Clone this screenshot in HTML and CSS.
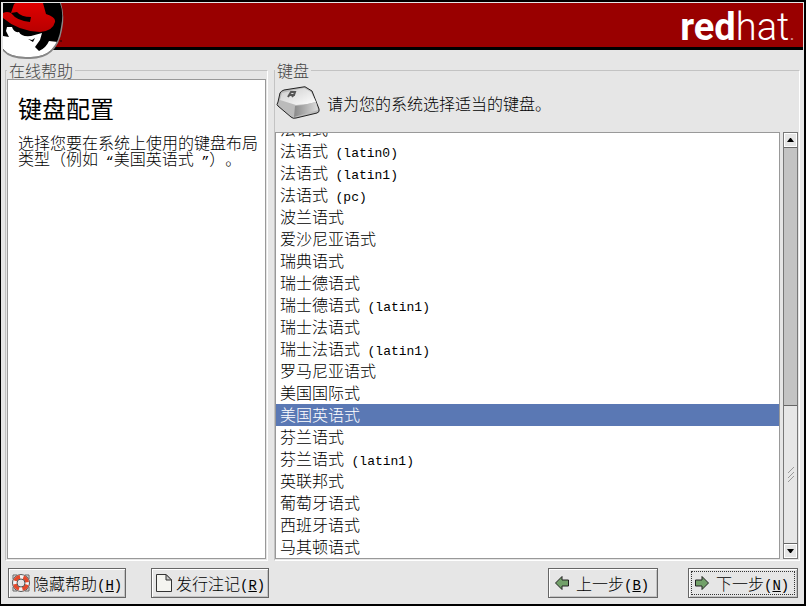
FILE: index.html
```
<!DOCTYPE html>
<html lang="zh-CN">
<head>
<meta charset="utf-8">
<title>键盘配置</title>
<link rel="stylesheet" href="styles.css">
</head>
<body>
<div class="window">
<header class="banner">
  <svg class="shadowman" width="66" height="62" viewBox="0 0 66 62" aria-hidden="true">
    <defs>
      <clipPath id="disc"><path d="M0 0H57Q61 10 58 24Q54 55 26 54Q8 55 0 46Z"/></clipPath>
      <linearGradient id="felt" x2="0" y2="1"><stop stop-color="#e00000"/><stop offset="1" stop-color="#b80000"/></linearGradient>
    </defs>
    <path d="M0 0H58Q62 14 59 27Q54 56 27 56Q8 57 0 48Z" fill="#888"/>
    <g clip-path="url(#disc)">
      <path d="M0 0H66V60H0Z" fill="#000"/>
      <path d="M0 33L6 34L3 28L4 24L9 24Q11 30 16 29Q18 34 28 33L39 30L37 37L32 44L36 48Q43 45 46 38L55 39Q47 57 25 57Q7 56 0 46Z" fill="#fff"/>
      <path d="M0 10Q4 8 8 10L11 1Q13 -1 19 0H40L43 11Q53 14 52 19Q50 28 37 29Q15 28 0 15Z" fill="url(#felt)"/>
      <path d="M8 10L14 9Q18 14 28 14L27 19Q14 18 8 10Z" fill="#000"/>
      <path d="M25 36L29 37L32 35L30 39Z" fill="#000"/>
    </g>
    <circle cx="58" cy="38" r="1" fill="#400"/>
  </svg>
  <div class="brand"><b>red</b>hat<small>.</small></div>
</header>
<main class="content">
  <fieldset class="frame help">
    <legend>在线帮助</legend>
    <div class="help-text">
      <h1>键盘配置</h1>
      <p>选择您要在系统上使用的键盘布局类型（例如<span class="latin"> “</span>美国英语式<span class="latin"> ”</span>）。</p>
    </div>
  </fieldset>
  <fieldset class="frame keyboard">
    <legend>键盘</legend>
    <div class="prompt">
      <svg width="46" height="36" viewBox="0 0 46 36" aria-hidden="true">
        <defs>
          <linearGradient id="top" x2="1" y2="1"><stop stop-color="#ccc"/><stop offset="1" stop-color="#fff"/></linearGradient>
          <linearGradient id="front" x2="1"><stop stop-color="#888"/><stop offset="1" stop-color="#ddd"/></linearGradient>
        </defs>
        <path d="M4 8Q5 6 8 5L27 2Q29 1 31 3L36 6L43 24Q44 27 41 28L20 33Q17 34 15 32L2 21Q0 20 2 17Z" fill="#bbb" stroke="#222"/>
        <path d="M6 8L28 3L35 7L40 17Q30 20 20 20L4 15Z" fill="url(#top)"/>
        <path d="M19 21Q30 20 40 17L42 25L18 32Z" fill="url(#front)"/>
        <path d="M12 12L15 7L19 7L18 10L14 10M16 10L17 12" fill="none" stroke="#555" stroke-width="2"/>
      </svg>
      <label id="prompt">请为您的系统选择适当的键盘。</label>
    </div>
    <div class="list-row">
      <ul class="list" role="listbox" aria-labelledby="prompt">
        <li>法语式</li>
        <li>法语式 <span class="latin">(latin0)</span></li>
        <li>法语式 <span class="latin">(latin1)</span></li>
        <li>法语式 <span class="latin">(pc)</span></li>
        <li>波兰语式</li>
        <li>爱沙尼亚语式</li>
        <li>瑞典语式</li>
        <li>瑞士德语式</li>
        <li>瑞士德语式 <span class="latin">(latin1)</span></li>
        <li>瑞士法语式</li>
        <li>瑞士法语式 <span class="latin">(latin1)</span></li>
        <li>罗马尼亚语式</li>
        <li>美国国际式</li>
        <li class="selected">美国英语式</li>
        <li>芬兰语式</li>
        <li>芬兰语式 <span class="latin">(latin1)</span></li>
        <li>英联邦式</li>
        <li>葡萄牙语式</li>
        <li>西班牙语式</li>
        <li>马其顿语式</li>
      </ul>
      <div class="scrollbar">
        <button class="step" aria-label="向上"><svg width="7" height="4" viewBox="0 0 7 4"><path d="M0 4L3 0H4L7 4Z"/></svg></button>
        <div class="track"></div>
        <div class="thumb"><svg width="8" height="17" viewBox="0 0 8 17"><path d="M1 7L7 1M1 12L7 6M1 16L7 10" stroke="#999"/></svg></div>
        <button class="step" aria-label="向下"><svg width="7" height="4" viewBox="0 0 7 4"><path d="M0 0L3 4H4L7 0Z"/></svg></button>
      </div>
    </div>
  </fieldset>
</main>
<footer class="actions">
  <button class="btn hide"><svg width="20" height="20" viewBox="0 0 20 20" aria-hidden="true"><path d="M2 6V2H6M14 2H18V6M18 14V18H14M6 18H2V14" fill="none" stroke="#666"/><circle cx="10" cy="10" r="9" fill="#555"/><circle cx="10" cy="10" r="6" fill="none" stroke="#f4f4f4" stroke-width="4"/><circle cx="10" cy="10" r="6" fill="none" stroke="#e5482a" stroke-width="4" stroke-dasharray="6 3.42" stroke-dashoffset="-1.7"/><circle cx="10" cy="10" r="4" fill="#e6e6e6" stroke="#555"/></svg><span>隐藏帮助<span class="latin">(<u>H</u>)</span></span></button>
  <button class="btn notes"><svg width="20" height="20" viewBox="0 0 20 20" aria-hidden="true"><path d="M2.5 1.5H12L17.5 7V18.5H2.5Z" fill="#f4f4f0" stroke="#333"/><path d="M12 1.5V7H17.5Z" fill="#ccc" stroke="#333"/></svg><span>发行注记<span class="latin">(<u>R</u>)</span></span></button>
  <span class="spacer"></span>
  <button class="btn nav back"><svg width="16" height="16" viewBox="0 0 16 16" aria-hidden="true"><path d="M1.5 8L8 1.5V5H14.5V11H8V14.5Z" fill="#72a069" stroke="#222"/></svg><span>上一步<span class="latin">(<u>B</u>)</span></span></button>
  <button class="btn nav next"><svg width="16" height="16" viewBox="0 0 16 16" aria-hidden="true"><path d="M14.5 8L8 1.5V5H1.5V11H8V14.5Z" fill="#72a069" stroke="#222"/></svg><span>下一步<span class="latin">(<u>N</u>)</span></span></button>
</footer>
</div>
</body>
</html>
```
FILE: styles.css
```
* { box-sizing: border-box; }
body {
  margin: 0;
  background: #000;
  color: #000;
  font: 300 16px/22px "Noto Sans CJK SC", sans-serif;
  text-spacing-trim: space-all;
}
.window {
  display: flex;
  flex-direction: column;
  height: 100vh;
  border: 2px solid #000;
  border-left-width: 1px;
  background: #e6e6e6;
  overflow: hidden;
}
.banner {
  flex: none;
  display: flex;
  justify-content: space-between;
  height: 48px;
  margin: 0 1px 0 2px;
  border-top: 1px solid #e6e6e6;
  border-bottom: 3px solid #000;
  background: #990000;
}
.shadowman { flex: none; position: relative; }
.brand {
  padding-right: 8px;
  color: #fff;
  font: 300 38px/48px Roboto, sans-serif;
}
.brand b { font-weight: 700; }
.brand small { font-size: 24px; opacity: .6; }
.content {
  flex: 1;
  min-height: 0;
  display: flex;
  gap: 6px;
  padding: 11px 4px 0;
}
.frame {
  display: flex;
  flex-direction: column;
  min-width: 0;
  min-height: 0;
  margin: 0;
  padding: 0 1px 1px 0;
  border: 1px solid #c3c3c3;
  border-right-color: #fff;
  border-bottom-color: #fff;
}
.frame legend { height: 18px; padding: 0 2px; color: #444; line-height: 18px; }
.help { flex: 0 0 263px; padding-left: 1px; }
.keyboard { flex: 1; }
.help-text { flex: 1; padding: 16px 6px 0 10px; border: 1px solid #999; background: #fff; }
h1 { margin: 0 0 14px; font-size: 24px; line-height: 24px; font-weight: 400; }
p { margin: 0; line-height: 16px; }
.prompt { flex: none; display: flex; align-items: center; gap: 5px; height: 53px; padding: 0 0 6px 1px; }
.list-row { flex: 1; min-height: 0; display: flex; gap: 3px; }
.list {
  flex: 1;
  display: flex;
  flex-direction: column;
  justify-content: flex-end;
  margin: 0;
  padding: 0;
  border: 1px solid #999;
  background: #fff;
  list-style: none;
  overflow: hidden;
}
.list li { flex: none; height: 22px; padding-left: 4px; line-height: 20px; }
.list .latin { margin-left: 4px; }
.selected { background: #5a78b4; color: #fff; }
.latin { font: 400 13px/16px "Liberation Mono", monospace; }
.scrollbar { flex: none; display: flex; flex-direction: column; width: 15px; border: 1px solid #777; background: #c3c3c3; }
.step { display: flex; align-items: center; justify-content: center; height: 14px; padding: 0; border: 1px solid #fff; border-radius: 0; background: #e6e6e6; }
.track { flex: 258; border-top: 1px solid #666; }
.thumb { flex: 138; display: flex; align-items: center; justify-content: center; border: 1px solid #666; border-width: 1px 0; background: #e6e6e6; }
.actions { flex: none; display: flex; align-items: center; padding: 6px 6px 5px 7px; height: 43px; }
.spacer { flex: 1; }
.btn {
  display: flex;
  align-items: center;
  gap: 2px;
  width: 118px;
  height: 30px;
  padding: 0 2px;
  border: 1px solid #666;
  border-radius: 0;
  background: #e6e6e6;
  box-shadow: inset 1px 1px #fff, inset -1px -1px #c3c3c3;
  color: #000;
  font: inherit;
  line-height: 20px;
  white-space: nowrap;
}
.btn .latin { font-size: 14px; }
.notes { margin-left: 25px; }
.nav { width: 110px; gap: 6px; padding: 0 5px; }
.next { margin-left: 30px; outline: 1px dotted #333; outline-offset: -4px; }
```
